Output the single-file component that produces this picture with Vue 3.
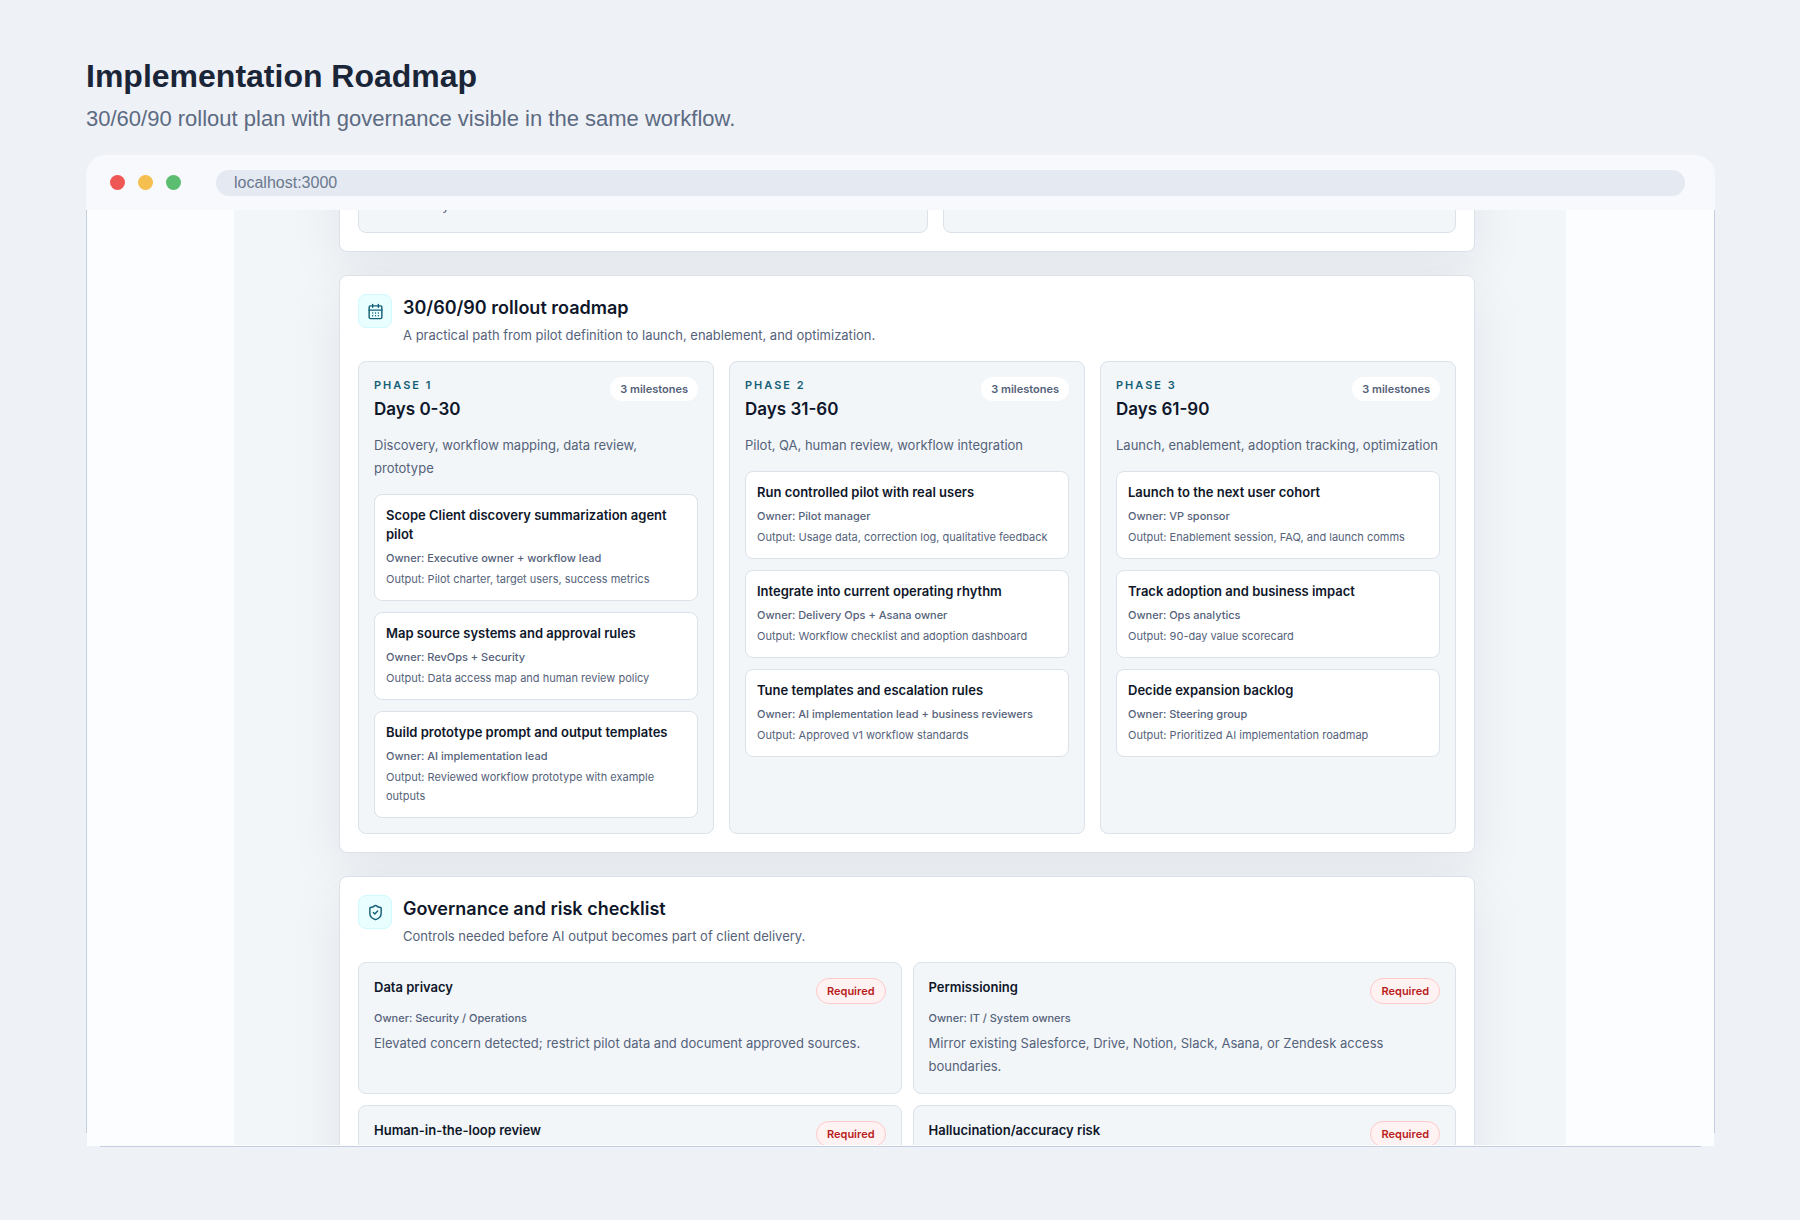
<template>
  <main class="page">
    <header class="intro">
      <h1>Implementation Roadmap</h1>
      <p>30/60/90 rollout plan with governance visible in the same workflow.</p>
    </header>

    <div class="browser">
      <div class="bar">
        <span class="dot red"></span>
        <span class="dot amber"></span>
        <span class="dot green"></span>
        <input class="url" type="text" value="localhost:3000" aria-label="Address" />
      </div>

      <div class="viewport">
        <div class="app">
          <section class="card previous">
            <div class="panel"><p>and delivery</p></div>
            <div class="panel"></div>
          </section>

          <section class="card">
            <div class="heading">
              <span class="icon">
                <svg viewBox="0 0 24 24">
                  <path d="M8 2v4M16 2v4M3 10h18M8 14h.01M12 14h.01M16 14h.01M8 18h.01M12 18h.01M16 18h.01" />
                  <rect x="3" y="4" width="18" height="18" rx="2" />
                </svg>
              </span>
              <div>
                <h2>30/60/90 rollout roadmap</h2>
                <p>A practical path from pilot definition to launch, enablement, and optimization.</p>
              </div>
            </div>
            <div class="phases">
              <article v-for="(phase, i) in phases" :key="phase.days" class="panel">
                <div class="panel-head">
                  <div>
                    <p class="eyebrow">Phase {{ i + 1 }}</p>
                    <h3>{{ phase.days }}</h3>
                  </div>
                  <span class="pill">{{ phase.milestones.length }} milestones</span>
                </div>
                <p class="summary">{{ phase.summary }}</p>
                <ul class="milestones">
                  <li v-for="m in phase.milestones" :key="m.title">
                    <h4>{{ m.title }}</h4>
                    <p class="owner">Owner: {{ m.owner }}</p>
                    <p class="output">Output: {{ m.output }}</p>
                  </li>
                </ul>
              </article>
            </div>
          </section>

          <section class="card">
            <div class="heading">
              <span class="icon">
                <svg viewBox="0 0 24 24">
                  <path d="M20 13c0 5-3.5 7.5-7.66 8.95a1 1 0 0 1-.67-.01C7.5 20.5 4 18 4 13V6a1 1 0 0 1 1-1c2 0 4.5-1.2 6.24-2.72a1.17 1.17 0 0 1 1.52 0C14.51 3.81 17 5 19 5a1 1 0 0 1 1 1z" />
                  <path d="m9 12 2 2 4-4" />
                </svg>
              </span>
              <div>
                <h2>Governance and risk checklist</h2>
                <p>Controls needed before AI output becomes part of client delivery.</p>
              </div>
            </div>
            <div class="checks">
              <article v-for="check in checks" :key="check.title" class="panel">
                <div class="panel-head">
                  <h4>{{ check.title }}</h4>
                  <span class="pill required">Required</span>
                </div>
                <template v-if="check.owner">
                  <p class="owner">Owner: {{ check.owner }}</p>
                  <p class="note">{{ check.note }}</p>
                </template>
              </article>
            </div>
          </section>
        </div>
      </div>
    </div>
  </main>
</template>

<script setup>
const phases = [
  {
    days: "Days 0-30",
    summary: "Discovery, workflow mapping, data review, prototype",
    milestones: [
      { title: "Scope Client discovery summarization agent pilot", owner: "Executive owner + workflow lead", output: "Pilot charter, target users, success metrics" },
      { title: "Map source systems and approval rules", owner: "RevOps + Security", output: "Data access map and human review policy" },
      { title: "Build prototype prompt and output templates", owner: "AI implementation lead", output: "Reviewed workflow prototype with example outputs" },
    ],
  },
  {
    days: "Days 31-60",
    summary: "Pilot, QA, human review, workflow integration",
    milestones: [
      { title: "Run controlled pilot with real users", owner: "Pilot manager", output: "Usage data, correction log, qualitative feedback" },
      { title: "Integrate into current operating rhythm", owner: "Delivery Ops + Asana owner", output: "Workflow checklist and adoption dashboard" },
      { title: "Tune templates and escalation rules", owner: "AI implementation lead + business reviewers", output: "Approved v1 workflow standards" },
    ],
  },
  {
    days: "Days 61-90",
    summary: "Launch, enablement, adoption tracking, optimization",
    milestones: [
      { title: "Launch to the next user cohort", owner: "VP sponsor", output: "Enablement session, FAQ, and launch comms" },
      { title: "Track adoption and business impact", owner: "Ops analytics", output: "90-day value scorecard" },
      { title: "Decide expansion backlog", owner: "Steering group", output: "Prioritized AI implementation roadmap" },
    ],
  },
];

const checks = [
  { title: "Data privacy", owner: "Security / Operations", note: "Elevated concern detected; restrict pilot data and document approved sources." },
  { title: "Permissioning", owner: "IT / System owners", note: "Mirror existing Salesforce, Drive, Notion, Slack, Asana, or Zendesk access boundaries." },
  { title: "Human-in-the-loop review" },
  { title: "Hallucination/accuracy risk" },
];
</script>

<style>
body {
  margin: 0;
  background: #eef1f6;
}
</style>

<style scoped>
* {
  box-sizing: border-box;
}

h1, h2, h3, h4, p, ul {
  margin: 0;
  padding: 0;
  font-weight: 400;
}

.page {
  height: 100vh;
  padding: 56px 85px 73px 86px;
  display: flex;
  flex-direction: column;
  background: #eef1f6;
  font-family: "Liberation Sans", Arial, sans-serif;
}

.intro {
  height: 99px;
  flex: none;
}

.intro h1 {
  font-size: 32px;
  line-height: 40px;
  font-weight: 700;
  color: #1a2538;
}

.intro p {
  margin-top: 9px;
  font-size: 22px;
  line-height: 28px;
  color: #5c6b82;
}

.browser {
  flex: 1;
  min-height: 0;
  display: flex;
  flex-direction: column;
  padding-bottom: 1px;
  background: linear-gradient(#c3cfdf, #c3cfdf) center bottom / calc(100% - 28px) 1px no-repeat;
}

.bar {
  flex: none;
  height: 55px;
  padding: 0 30px 0 24px;
  display: flex;
  align-items: center;
  gap: 13px;
  border-radius: 20px 20px 0 0;
  background: #f7f9fd;
}

.dot {
  width: 15px;
  height: 15px;
  border-radius: 50%;
}

.red { background: #ef5754; }
.amber { background: #f5bf50; }
.green { background: #5abd70; }

.url {
  flex: 1;
  height: 26px;
  margin-left: 22px;
  padding: 0 18px;
  border: 0;
  border-radius: 13px;
  background: #e5eaf2;
  color: #6b788e;
  font: 16px/26px "Liberation Sans", Arial, sans-serif;
}

/* side lines stop short of the bottom corners */
.viewport {
  flex: 1;
  min-height: 0;
  padding: 0 149px 1px 148px;
  overflow: hidden;
  background:
    linear-gradient(#c3cfdf, #c3cfdf) left top / 1px calc(100% - 13px) no-repeat,
    linear-gradient(#c3cfdf, #c3cfdf) right top / 1px calc(100% - 13px) no-repeat,
    linear-gradient(#fcfdff, #fcfdff) center / calc(100% - 2px) 100% no-repeat;
}

.app {
  height: 100%;
  padding: 0 91px 0 105px;
  overflow: hidden;
  display: flex;
  flex-direction: column;
  gap: 23px;
  background: #f2f6f9;
  font-family: Inter, sans-serif;
  color: #0f172a;
}

.card {
  flex: none;
  padding: 18px;
  border: 1px solid #dbe2ea;
  border-radius: 8px;
  background: #fff;
  box-shadow: 0 17px 56px rgba(24, 20, 42, 0.07);
}

/* scrolled almost out of view */
.previous {
  margin-top: -58px;
  display: grid;
  grid-template-columns: 570fr 513fr;
  gap: 15px;
}

.previous .panel {
  height: 62px;
  display: flex;
  align-items: flex-end;
  font-size: 13px;
  line-height: 23px;
  color: #55627a;
}

.heading {
  display: flex;
  align-items: flex-start;
  gap: 11px;
  margin-bottom: 14px;
}

.icon {
  width: 34px;
  height: 34px;
  display: grid;
  place-items: center;
  border: 1px solid #cffafe;
  border-radius: 8px;
  background: #e8feff;
}

.icon svg {
  width: 17px;
  height: 17px;
  fill: none;
  stroke: #155e75;
  stroke-width: 2;
  stroke-linecap: round;
  stroke-linejoin: round;
}

h2 {
  font-size: 18px;
  line-height: 28px;
  font-weight: 600;
}

.heading p {
  margin-top: 2px;
  font-size: 13px;
  line-height: 23px;
  color: #55627a;
}

.phases {
  display: grid;
  grid-template-columns: repeat(3, 1fr);
  gap: 15px;
}

.checks {
  display: grid;
  grid-template-columns: repeat(2, 1fr);
  gap: 11px;
}

.panel {
  padding: 15px;
  border: 1px solid #dbe2ea;
  border-radius: 8px;
  background: #f2f6f9;
}

.panel-head {
  display: flex;
  justify-content: space-between;
  align-items: flex-start;
}

.eyebrow {
  font-size: 11px;
  line-height: 16px;
  font-weight: 600;
  letter-spacing: 2px;
  text-transform: uppercase;
  color: #155e75;
}

h3 {
  margin-top: 4px;
  font-size: 17px;
  line-height: 24px;
  font-weight: 600;
}

.pill {
  padding: 4px 10px;
  border-radius: 12px;
  background: #fff;
  font-size: 11px;
  line-height: 16px;
  font-weight: 600;
  color: #55627a;
}

.required {
  border: 1px solid #fecaca;
  border-radius: 13px;
  background: #fef2f2;
  color: #b91c1c;
}

.summary {
  margin: 13px 0 14px;
  font-size: 13px;
  line-height: 23px;
  color: #55627a;
}

.milestones {
  display: grid;
  gap: 11px;
  list-style: none;
}

.milestones li {
  padding: 11px;
  border: 1px solid #dbe2ea;
  border-radius: 8px;
  background: #fff;
}

h4 {
  font-size: 13px;
  line-height: 19px;
  font-weight: 600;
}

.owner {
  margin-top: 5px;
  font-size: 11px;
  line-height: 19px;
  font-weight: 500;
  color: #55627a;
}

.output {
  margin-top: 2px;
  font-size: 11px;
  line-height: 19px;
  color: #55627a;
}

.note {
  margin-top: 4px;
  font-size: 13px;
  line-height: 23px;
  color: #55627a;
}
</style>
